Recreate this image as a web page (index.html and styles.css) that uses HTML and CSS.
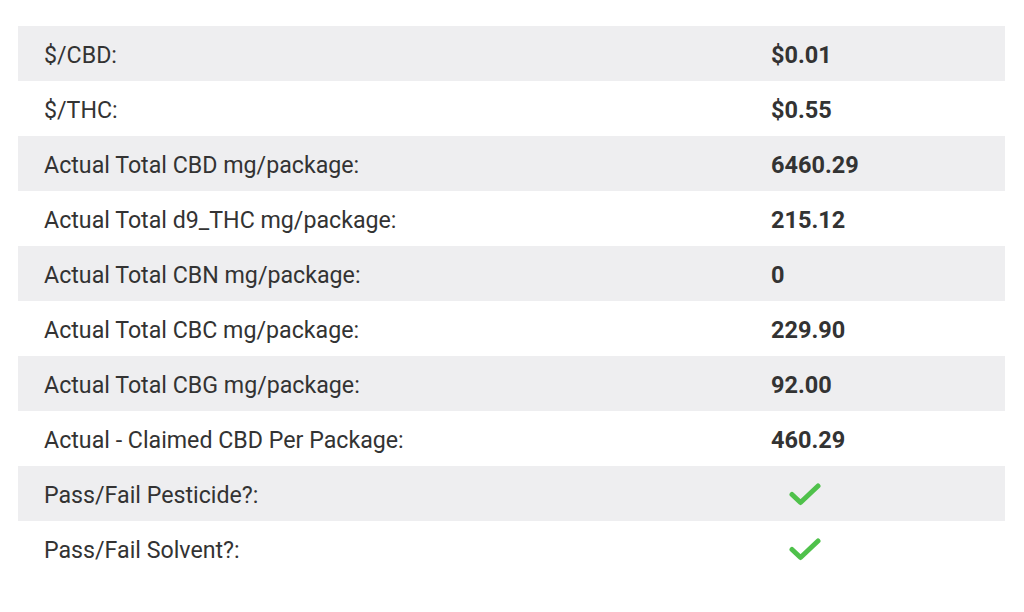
FILE: index.html
```html
<!DOCTYPE html>
<html>
<head>
<meta charset="utf-8">
<link rel="stylesheet" href="styles.css">
</head>
<body>
<div class="wrap">
  <div class="table">
    <div class="row"><div class="label">$/CBD:</div><div class="value">$0.01</div></div>
    <div class="row"><div class="label">$/THC:</div><div class="value">$0.55</div></div>
    <div class="row"><div class="label">Actual Total CBD mg/package:</div><div class="value">6460.29</div></div>
    <div class="row"><div class="label">Actual Total d9_THC mg/package:</div><div class="value">215.12</div></div>
    <div class="row"><div class="label">Actual Total CBN mg/package:</div><div class="value">0</div></div>
    <div class="row"><div class="label">Actual Total CBC mg/package:</div><div class="value">229.90</div></div>
    <div class="row"><div class="label">Actual Total CBG mg/package:</div><div class="value">92.00</div></div>
    <div class="row"><div class="label">Actual - Claimed CBD Per Package:</div><div class="value">460.29</div></div>
    <div class="row"><div class="label">Pass/Fail Pesticide?:</div><div class="value"><svg class="check" viewBox="0 0 32 24"><path d="M3 12.5 L11.5 20.5 L29 4" fill="none" stroke="#4fc14b" stroke-width="5" stroke-linecap="round" stroke-linejoin="round"/></svg></div></div>
    <div class="row"><div class="label">Pass/Fail Solvent?:</div><div class="value"><svg class="check" viewBox="0 0 32 24"><path d="M3 12.5 L11.5 20.5 L29 4" fill="none" stroke="#4fc14b" stroke-width="5" stroke-linecap="round" stroke-linejoin="round"/></svg></div></div>
  </div>
</div>
</body>
</html>
```

FILE: styles.css
```css
html, body {
  margin: 0;
  padding: 0;
  background: #ffffff;
}
body {
  font-family: Roboto, "Liberation Sans", sans-serif;
  color: #333333;
}
.wrap {
  padding: 26px 19px 0 18px;
}
.table {
  display: flex;
  flex-direction: column;
}
.row {
  display: grid;
  grid-template-columns: 753px 1fr;
  height: 55px;
  align-items: center;
}
.row:nth-child(odd) {
  background: #eeeef0;
}
.label {
  padding-left: 26px;
  padding-top: 2px;
  font-size: 23.2px;
}
.value {
  padding-top: 2px;
  font-size: 23.5px;
  font-weight: 700;
  display: flex;
  align-items: center;
}
.check {
  width: 32px;
  height: 24px;
  margin-left: 18px;
  margin-top: -2px;
  display: block;
}
```
